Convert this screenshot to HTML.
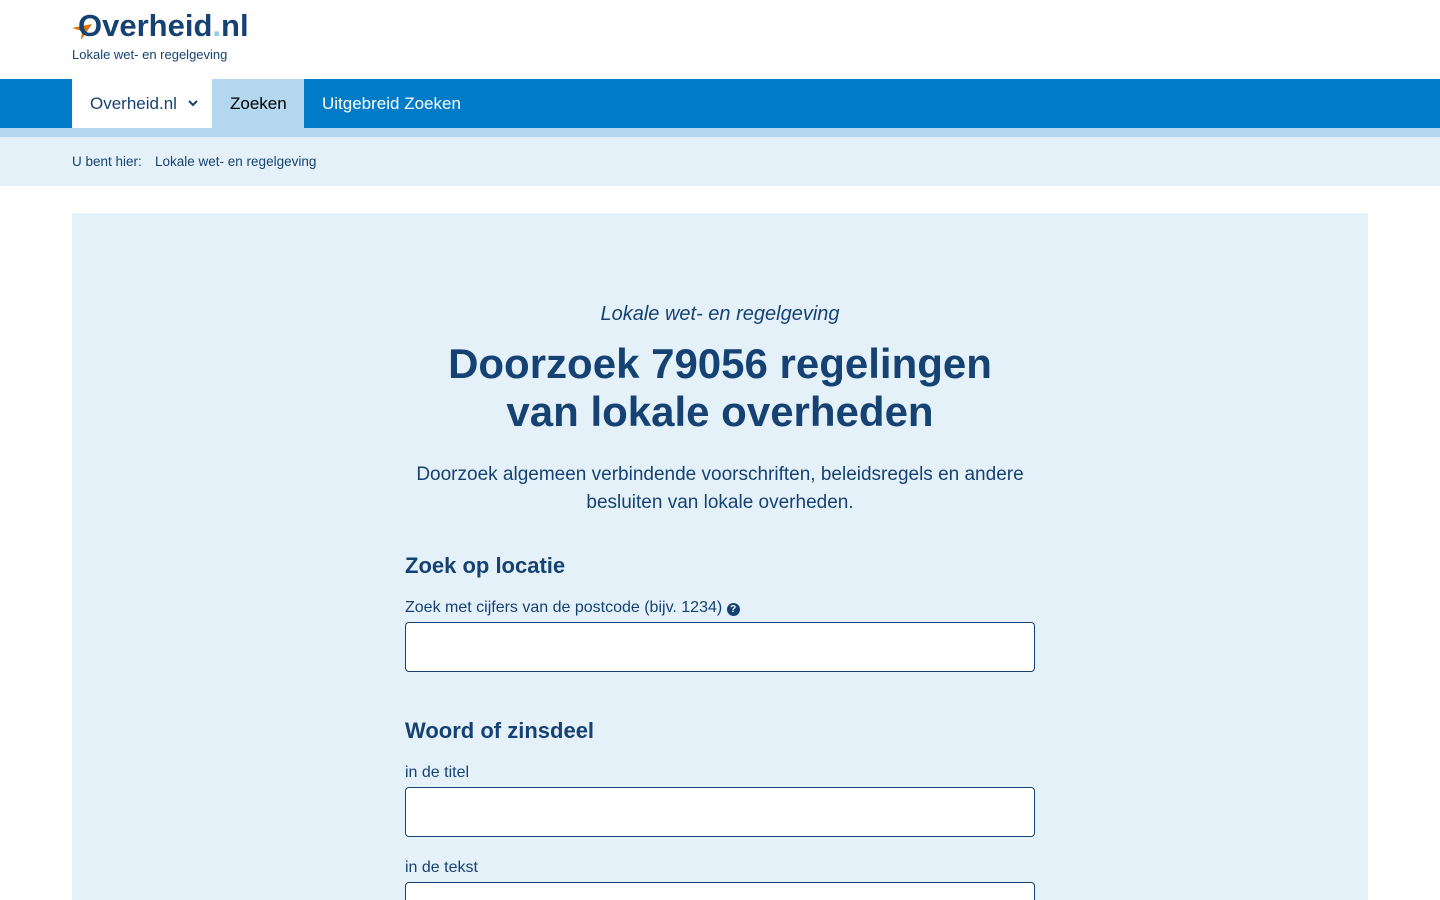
<!DOCTYPE html>
<html style="overflow:hidden;height:900px"><head><meta charset="utf-8"><style>
*{box-sizing:border-box;margin:0;padding:0}
body{width:1440px;height:900px;overflow:hidden;position:relative;background:#fff;font-family:"Liberation Sans",sans-serif;color:#154273}
.logo{position:absolute;left:72px;top:8px}
.logo .t{position:absolute;left:6px;top:0;font-size:31px;font-weight:bold;color:#154273;white-space:nowrap}
.logo .sub{position:absolute;left:0;top:39px;font-size:13px;white-space:nowrap}
.nav{position:absolute;top:79px;left:0;width:1440px;height:49px;background:#007bc7}
.navb{position:absolute;top:128px;left:0;width:1440px;height:9px;background:#b2d7ee}
.crumb{position:absolute;top:137px;left:0;width:1440px;height:49px;background:#e5f1f9;font-size:13.5px}
.nav div{position:absolute;top:0;height:49px;line-height:49px;font-size:17px}
.main{position:absolute;left:72px;top:213px;width:1296px;height:687px;background:#e5f1f9}
.c{position:absolute;left:0;width:1440px;text-align:center}
label,h3{position:absolute;left:405px}
h3{font-size:22px}
label{font-size:16px}
.in{position:absolute;left:405px;width:630px;height:50px;background:#fff;border:1px solid #154273;border-radius:4px}
</style></head><body>
<div class="logo">
<svg style="position:absolute;left:0;top:12px" width="22" height="20"><polygon points="0,8 20,4 9,20 10,11" fill="#e17000"/></svg>
<div class="t">Overheid<span style="color:#8fcae7">.</span>nl</div>
<div class="sub">Lokale wet- en regelgeving</div>
</div>
<div class="nav">
<div style="left:72px;width:140px;background:#fff;color:#154273;padding-left:18px">Overheid.nl <svg style="position:absolute;left:116px;top:21px" width="10" height="7"><path d="M1 1l4 4 4-4" stroke="#154273" stroke-width="2" fill="none"/></svg></div>
<div style="left:212px;width:92px;background:#b2d7ee;color:#000;padding-left:18px">Zoeken</div>
<div style="left:322px;color:#fff">Uitgebreid Zoeken</div>
</div>
<div class="navb"></div>
<div class="crumb"><span style="position:absolute;left:72px;top:17px">U bent hier:</span><span style="position:absolute;left:155px;top:17px">Lokale wet- en regelgeving</span></div>
<div class="main"></div>
<div class="c" style="top:303px;font-size:20px;font-style:italic">Lokale wet- en regelgeving</div>
<div class="c" style="top:340px;font-size:42px;font-weight:bold;line-height:48px">Doorzoek 79056 regelingen<br>van lokale overheden</div>
<div class="c" style="top:461px;font-size:19px;line-height:28px">Doorzoek algemeen verbindende voorschriften, beleidsregels en andere<br>besluiten van lokale overheden.</div>
<h3 style="top:553px">Zoek op locatie</h3>
<label style="top:599px">Zoek met cijfers van de postcode (bijv. 1234) <span style="display:inline-block;width:13px;height:13px;border-radius:50%;background:#154273;color:#fff;font-size:10px;text-align:center;line-height:13px;font-weight:bold">?</span></label>
<div class="in" style="top:622px"></div>
<h3 style="top:718px">Woord of zinsdeel</h3>
<label style="top:764px">in de titel</label>
<div class="in" style="top:787px"></div>
<label style="top:859px">in de tekst</label>
<div class="in" style="top:882px"></div>
</body></html>
